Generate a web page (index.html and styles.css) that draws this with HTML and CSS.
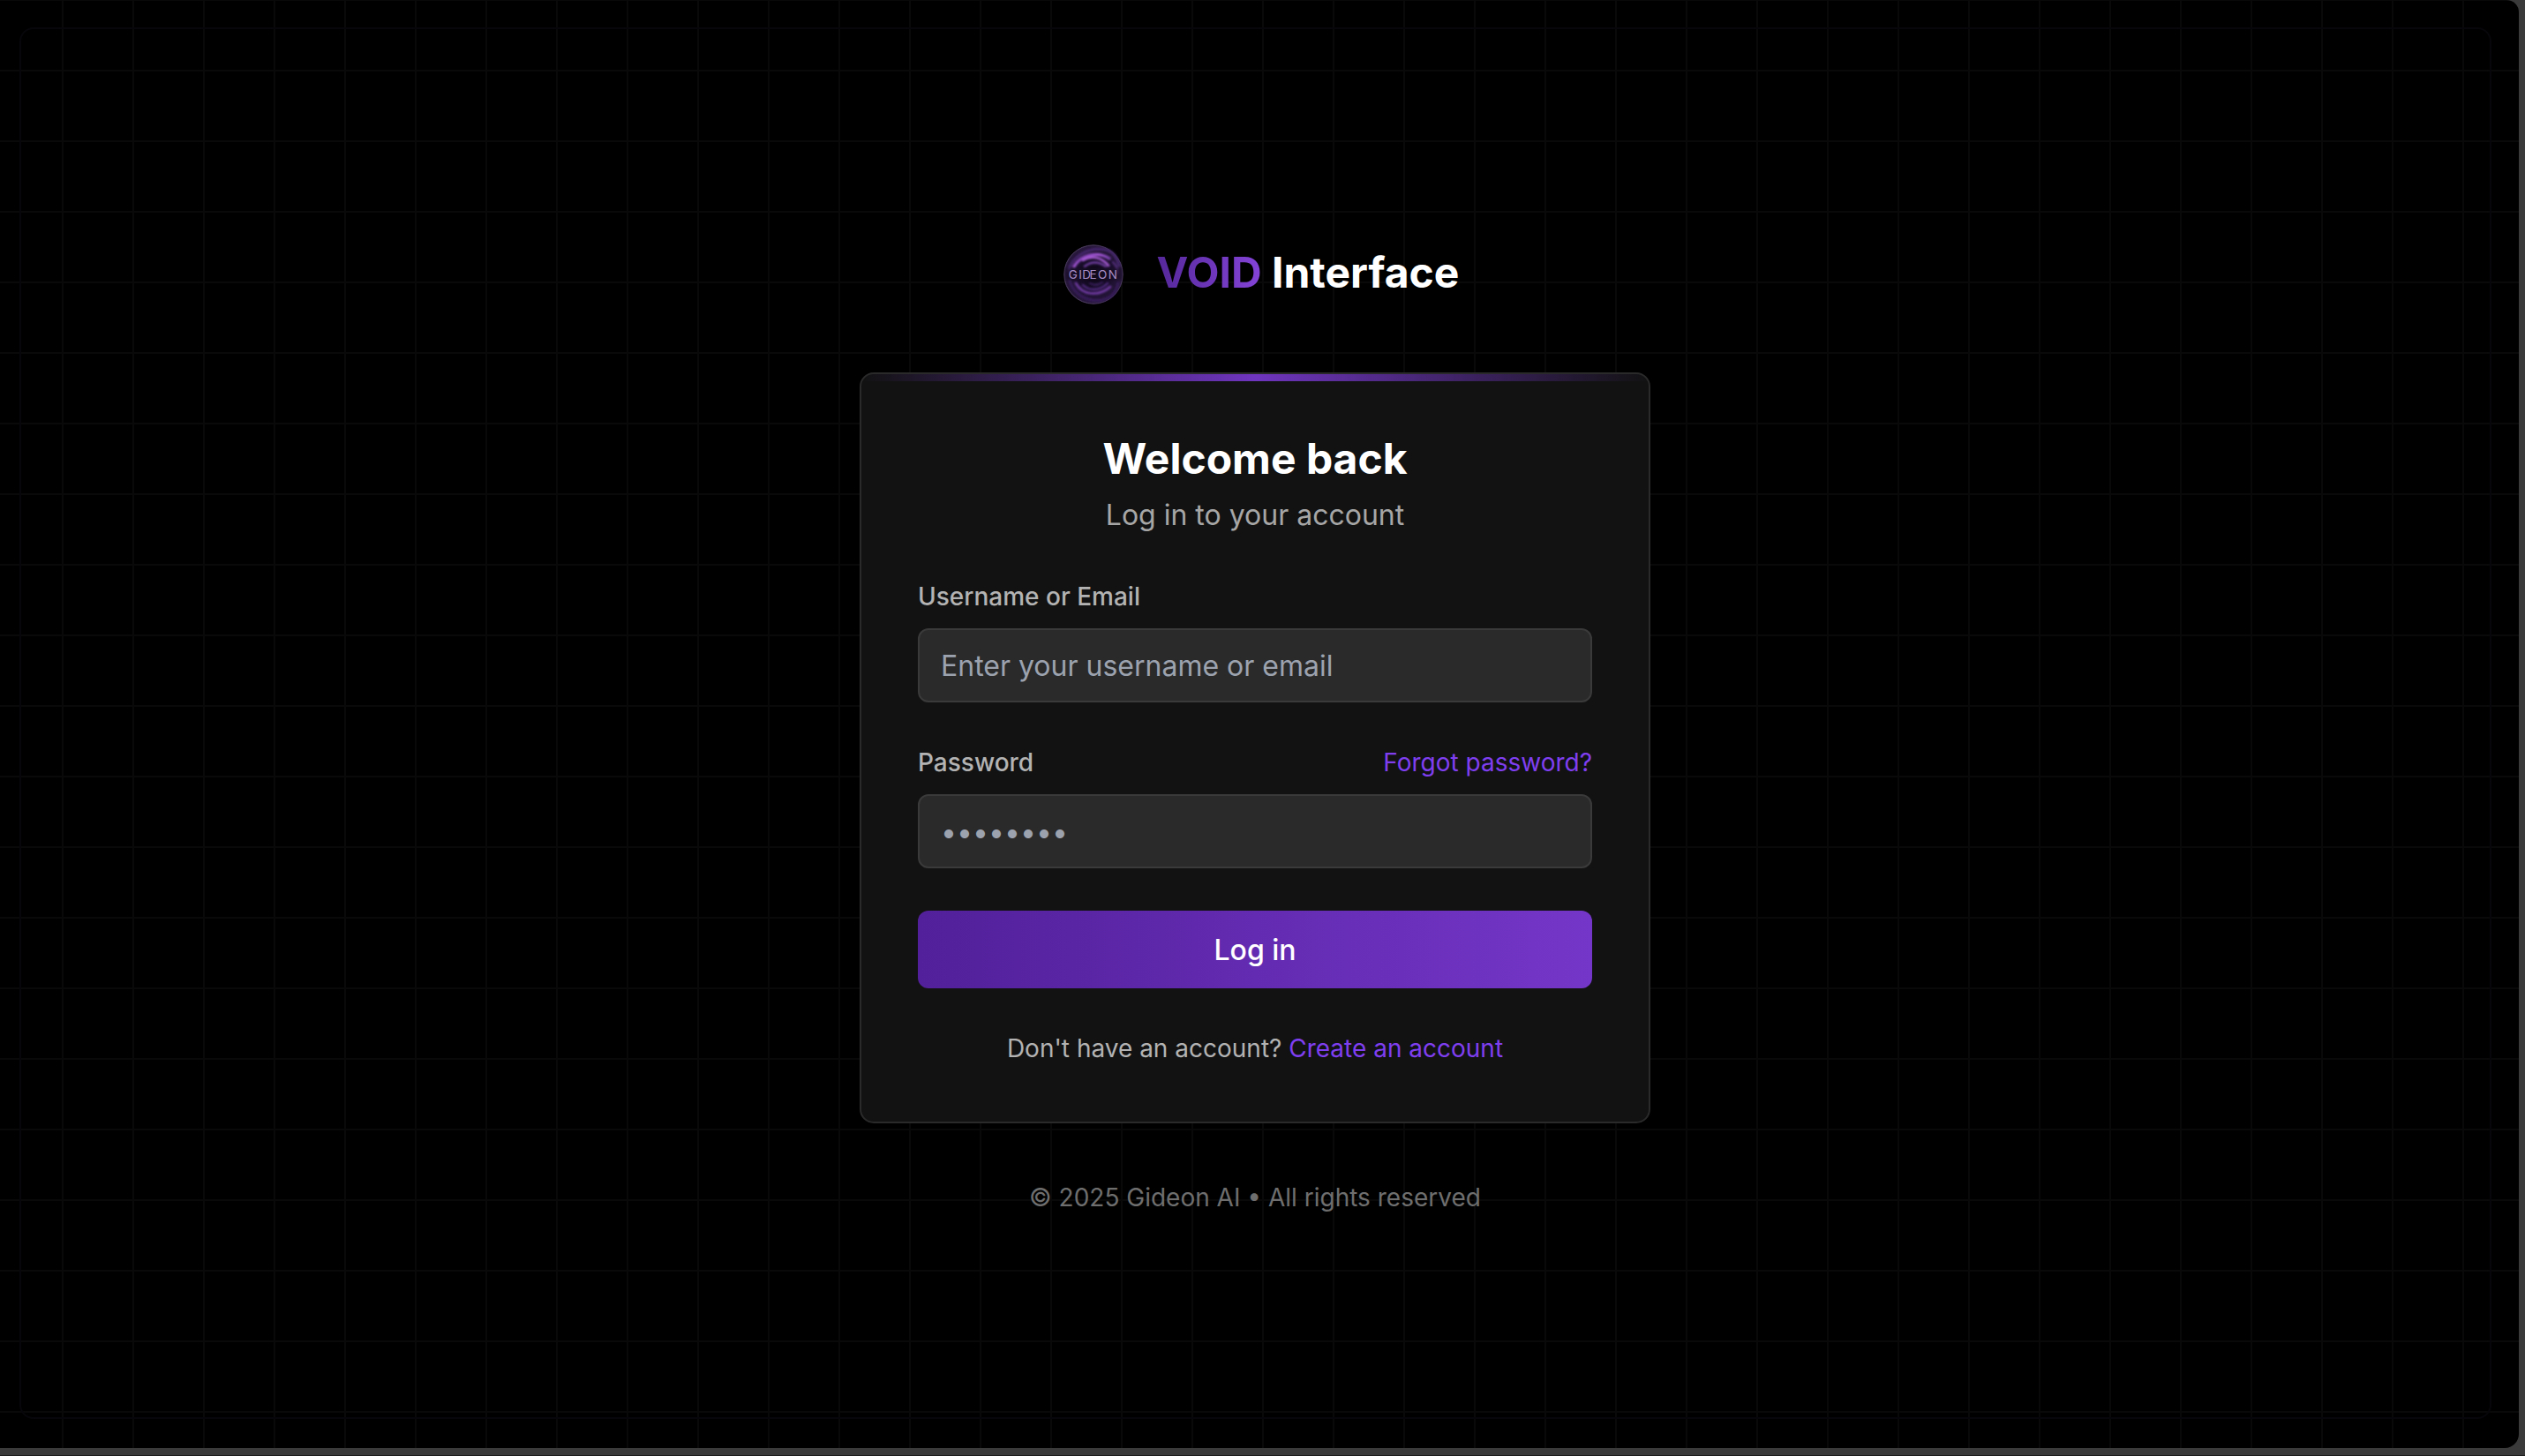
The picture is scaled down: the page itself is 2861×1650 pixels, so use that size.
FILE: index.html
```html
<!DOCTYPE html>
<html lang="en">
<head>
<meta charset="utf-8">
<title>VOID Interface - Log in</title>
<link rel="stylesheet" href="styles.css">
</head>
<body>
<div class="window">
  <div class="frame"></div>
  <main class="content">
    <header class="brand">
      <svg class="logo" viewBox="0 0 80 80" aria-hidden="true">
        <defs>
          <radialGradient id="disc" cx="50%" cy="50%" r="50%">
            <stop offset="0" stop-color="#0a0612"/>
            <stop offset="0.6" stop-color="#1a0e2c"/>
            <stop offset="1" stop-color="#2a1a3e"/>
          </radialGradient>
          <linearGradient id="sw" x1="0" y1="0" x2="1" y2="0.6">
            <stop offset="0" stop-color="#5a2f8c"/>
            <stop offset="0.5" stop-color="#a657d8"/>
            <stop offset="1" stop-color="#6a3a9c"/>
          </linearGradient>
          <filter id="soft" x="-10%" y="-10%" width="120%" height="120%">
            <feGaussianBlur stdDeviation="0.8"/>
          </filter>
        </defs>
        <circle cx="40" cy="40" r="33.2" fill="url(#disc)" stroke="#4e3e62" stroke-width="1"/>
        <g fill="none" stroke-linecap="round" filter="url(#soft)">
          <path d="M12 36C15 20 34 8 54 12C62 14 67 21 69 30" stroke="#44276c" stroke-width="3"/>
          <path d="M18 31C25 18 44 13 58 22" stroke="url(#sw)" stroke-width="3.4"/>
          <path d="M28 24C37 18 49 20 57 30" stroke="#a85cd6" stroke-width="2.6"/>
          <path d="M30 31C37 25 46 25 54 31" stroke="#6e3c9e" stroke-width="2.4"/>
          <path d="M62 26C66 30 68 35 67 39" stroke="#532d7c" stroke-width="2.2"/>
          <path d="M13 47C17 62 33 72 50 69C60 67 66 60 68 50" stroke="#371f5c" stroke-width="2.8"/>
          <path d="M20 50C27 63 45 66 59 54" stroke="#6a379a" stroke-width="3"/>
          <path d="M28 52C35 59 47 59 56 50" stroke="#512b80" stroke-width="2.4"/>
          <path d="M36 50C41 53 46 52 50 49" stroke="#3c2062" stroke-width="2"/>
        </g>
        <rect x="8" y="33" width="64" height="13" fill="#150b22" opacity="0.5" filter="url(#soft)"/>
        <text class="logo-text" x="40" y="45" text-anchor="middle">GI<tspan dx="-1">D</tspan><tspan dx="-3">E</tspan>ON</text>
      </svg>
      <h1 class="brand-name"><span class="void">VOID</span> Interface</h1>
    </header>

    <section class="card">
      <div class="card-bar"></div>
      <div class="card-body">
        <h2 class="title">Welcome back</h2>
        <p class="subtitle">Log in to your account</p>
        <form class="form">
          <div class="field">
            <div class="label-row"><label class="label" for="user">Username or Email</label></div>
            <input class="input" id="user" type="text" placeholder="Enter your username or email">
          </div>
          <div class="field">
            <div class="label-row">
              <label class="label" for="pass">Password</label>
              <a class="link" href="#">Forgot password?</a>
            </div>
            <input class="input input-pass" id="pass" type="password" value="password">
          </div>
          <button class="submit" type="button">Log in</button>
        </form>
        <p class="signup">Don't have an account? <a class="link" href="#">Create an account</a></p>
      </div>
    </section>

    <footer class="copyright">© 2025 Gideon AI • All rights reserved</footer>
  </main>
</div>
</body>
</html>
```

FILE: styles.css
```css
* { box-sizing: border-box; }
html { background: #1c1c1c; }
html, body { margin: 0; padding: 0; }
body {
  height: 1649px;
  background: #3a3a3a;
  font-family: Inter, "Liberation Sans", sans-serif;
  overflow: hidden;
}
.window {
  position: relative;
  width: 2854px;
  height: 1641px;
  background-color: #000;
  background-image:
    linear-gradient(to right, #090909 2px, transparent 2px),
    linear-gradient(to bottom, #090909 2px, transparent 2px);
  background-size: 80px 80px;
  background-position: 70px 79px;
  border-radius: 0 14px 16px 0;
  overflow: hidden;
}
.frame {
  position: absolute;
  left: 22px;
  top: 31px;
  right: 31px;
  bottom: 33px;
  border: 2px solid #07070b;
  border-radius: 16px;
}
.content {
  position: relative;
  width: 2844px;
  padding-top: 271px;
  display: flex;
  flex-direction: column;
  align-items: center;
}
.brand {
  display: flex;
  align-items: center;
  gap: 32px;
  height: 80px;
  padding-left: 8px;
  margin-bottom: 71px;
}
.logo { width: 80px; height: 80px; display: block; }
.logo-text {
  font-family: Inter, "Liberation Sans", sans-serif;
  font-size: 13.5px;
  font-weight: 400;
  letter-spacing: 1.4px;
  fill: #a78cc4;
}
.brand-name {
  margin: 0 0 4px;
  font-size: 48px;
  line-height: 64px;
  font-weight: 700;
  color: #fff;
}
.void {
  background: linear-gradient(90deg, #55289a, #8444d8);
  -webkit-background-clip: text;
  background-clip: text;
  color: transparent;
}
.card {
  width: 896px;
  height: 851px;
  background: #121212;
  border: 2px solid #2a2a2a;
  border-radius: 16px;
  overflow: hidden;
}
.card-bar {
  height: 8px;
  background: linear-gradient(90deg, transparent, #6f35bf, transparent);
}
.card-body {
  padding: 56px 64px 0;
  display: flex;
  flex-direction: column;
}
.title {
  margin: 0;
  font-size: 48px;
  line-height: 64px;
  font-weight: 700;
  color: #fff;
  text-align: center;
}
.subtitle {
  margin: 8px 0 0;
  font-size: 32px;
  line-height: 48px;
  color: #a6a6a6;
  text-align: center;
}
.form {
  margin-top: 48px;
  display: flex;
  flex-direction: column;
  gap: 48px;
}
.field { display: flex; flex-direction: column; gap: 16px; }
.label-row {
  display: flex;
  justify-content: space-between;
  align-items: center;
  height: 40px;
}
.label {
  font-size: 28px;
  line-height: 40px;
  font-weight: 500;
  color: #b3b3b3;
}
.link {
  font-size: 28px;
  line-height: 40px;
  color: #7f3ff0;
  text-decoration: none;
}
.input {
  display: block;
  width: 100%;
  height: 84px;
  padding: 16px 24px;
  background: #2a2a2a;
  border: 2px solid #3a3a3a;
  border-radius: 12px;
  font-family: inherit;
  font-size: 32px;
  color: #9ca3af;
  outline: none;
}
.input::placeholder { color: #9ca3af; opacity: 1; }
.submit {
  height: 88px;
  border: 0;
  border-radius: 12px;
  background: linear-gradient(90deg, #52209a, #7436c8);
  color: #fff;
  font-family: inherit;
  font-size: 32px;
  font-weight: 500;
}
.signup {
  margin: 48px 0 0;
  font-size: 28px;
  line-height: 40px;
  color: #b3b3b3;
  text-align: center;
}
.copyright {
  margin-top: 64px;
  font-size: 28px;
  line-height: 40px;
  color: #6e6e6e;
}
```
